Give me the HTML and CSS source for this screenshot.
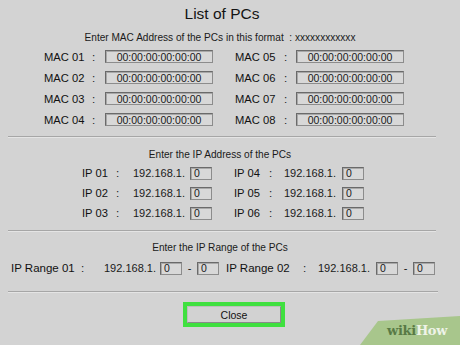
FILE: index.html
```html
<!DOCTYPE html>
<html>
<head>
<meta charset="utf-8">
<link rel="stylesheet" href="styles.css">
</head>
<body>
<main class="page">
  <h1 class="title">List of PCs</h1>
  <p class="hint">Enter MAC Address of the PCs in this format &nbsp;: xxxxxxxxxxxx</p>
  <div class="mac-grid">
    <span class="lbl">MAC 01</span><span class="colon">:</span><span class="box mac">00:00:00:00:00:00</span>
    <span class="lbl">MAC 05</span><span class="colon">:</span><span class="box mac">00:00:00:00:00:00</span>
    <span class="lbl">MAC 02</span><span class="colon">:</span><span class="box mac">00:00:00:00:00:00</span>
    <span class="lbl">MAC 06</span><span class="colon">:</span><span class="box mac">00:00:00:00:00:00</span>
    <span class="lbl">MAC 03</span><span class="colon">:</span><span class="box mac">00:00:00:00:00:00</span>
    <span class="lbl">MAC 07</span><span class="colon">:</span><span class="box mac">00:00:00:00:00:00</span>
    <span class="lbl">MAC 04</span><span class="colon">:</span><span class="box mac">00:00:00:00:00:00</span>
    <span class="lbl">MAC 08</span><span class="colon">:</span><span class="box mac">00:00:00:00:00:00</span>
  </div>
  <hr class="sep sep1">
  <p class="heading h-ip">Enter the IP Address of the PCs</p>
  <div class="ip-grid">
    <span class="lbl">IP 01</span><span class="colon">:</span><span class="ip">192.168.1.</span><span class="box oct">0</span>
    <span class="lbl">IP 04</span><span class="colon">:</span><span class="ip">192.168.1.</span><span class="box oct">0</span>
    <span class="lbl">IP 02</span><span class="colon">:</span><span class="ip">192.168.1.</span><span class="box oct">0</span>
    <span class="lbl">IP 05</span><span class="colon">:</span><span class="ip">192.168.1.</span><span class="box oct">0</span>
    <span class="lbl">IP 03</span><span class="colon">:</span><span class="ip">192.168.1.</span><span class="box oct">0</span>
    <span class="lbl">IP 06</span><span class="colon">:</span><span class="ip">192.168.1.</span><span class="box oct">0</span>
  </div>
  <hr class="sep sep2">
  <p class="heading h-range">Enter the IP Range of the PCs</p>
  <div class="range-row">
    <span class="lbl r-lbl1">IP Range 01</span><span class="colon r-col1">:</span><span class="ip r-ip1">192.168.1.</span><span class="box oct">0</span><span class="dash">-</span><span class="box oct">0</span>
    <span class="lbl r-lbl2">IP Range 02</span><span class="colon r-col2">:</span><span class="ip r-ip2">192.168.1.</span><span class="box oct">0</span><span class="dash">-</span><span class="box oct">0</span>
  </div>
  <hr class="sep sep3">
  <div class="actions">
    <div class="close-ring"><button class="close-btn">Close</button></div>
  </div>
</main>
<div class="wh-logo">
  <svg width="100" height="30" viewBox="0 0 100 30">
    <polygon points="18,6 100,1 100,30 0,30" fill="#a8c68c"/>
  </svg>
  <span class="wh-text"><span class="wh-wiki">wiki</span><span class="wh-how">How</span></span>
</div>
</body>
</html>
```
FILE: styles.css
```css
html, body {
  margin: 0;
  padding: 0;
}
body {
  width: 460px;
  height: 345px;
  overflow: hidden;
  background: #d3d3d3;
  font-family: "Liberation Sans", Arial, sans-serif;
  color: #141414;
  position: relative;
}
.page {
  width: 444px;
  display: flex;
  flex-direction: column;
}
.title {
  margin: 4px 0 0;
  font-size: 15.5px;
  line-height: 20px;
  font-weight: normal;
  text-align: center;
}
.hint {
  margin: 8px 0 0;
  font-size: 10.1px;
  line-height: 12px;
  text-align: center;
  color: #1a1a1a;
  padding-right: 4px;
}
.heading {
  margin: 0;
  font-size: 10.1px;
  line-height: 12px;
  text-align: center;
  color: #1a1a1a;
  padding-right: 4px;
}
.h-ip { margin-top: 11px; }
.h-range { margin-top: 10px; }

.lbl {
  font-size: 11.2px;
  color: #111;
}
.colon {
  font-size: 11.5px;
  color: #222;
}
.ip {
  font-size: 11px;
  color: #1a1a1a;
}
.box {
  box-sizing: border-box;
  display: flex;
  align-items: center;
  background: #d8d8d8;
  border: 1px solid #6a6a6a;
  border-right-color: #8c8c8c;
  border-bottom-color: #8c8c8c;
  box-shadow: inset 1px 1px 0 #a8a8a8;
  font-size: 10.5px;
  color: #1a1a1a;
  height: 13px;
}
.mac {
  width: 108px;
  justify-content: center;
  justify-self: start;
}
.oct {
  width: 22px;
  padding-left: 3px;
  justify-self: start;
}

.mac-grid {
  margin-top: 2px;
  padding-left: 44px;
  display: grid;
  grid-template-columns: 48px 13px 130px 49px 12px 108px;
  grid-auto-rows: 21px;
  align-items: center;
}

.ip-grid {
  margin-top: 2px;
  padding-left: 82px;
  display: grid;
  grid-template-columns: 34px 17px 57px 44px 35px 15px 58px 22px;
  grid-auto-rows: 20px;
  align-items: center;
}

.range-row {
  margin-top: 4px;
  height: 20px;
  padding-left: 11px;
  display: flex;
  align-items: center;
}
.range-row .lbl { font-size: 11.5px; }
.r-lbl1 { width: 70px; }
.r-col1 { width: 23px; }
.r-ip1 { width: 56px; }
.r-lbl2 { width: 77px; margin-left: 7px; }
.r-col2 { width: 15px; }
.r-ip2 { width: 58px; }
.dash {
  width: 15px;
  text-align: center;
  font-size: 11px;
}

.sep {
  margin: 0 8px;
  height: 0;
  border: 0;
  border-top: 1px solid #a6a6a6;
  border-bottom: 1px solid #e4e4e4;
}
.sep1 { margin-top: 6px; }
.sep2 { margin-top: 7px; }
.sep3 { margin-top: 13px; margin-right: 6px; }

.actions {
  margin-top: 9px;
  padding-left: 183px;
  display: flex;
}
.close-ring {
  box-sizing: border-box;
  width: 102px;
  height: 25px;
  border: 4px solid #3fe03f;
  display: flex;
}
.close-btn {
  flex: 1;
  margin: 0;
  padding: 0;
  border: 1px solid #8a8a8a;
  border-top-color: #bdbdbd;
  border-left-color: #bdbdbd;
  background: #d2d2d2;
  font-family: "Liberation Sans", Arial, sans-serif;
  font-size: 10.5px;
  color: #111;
}

.wh-logo {
  position: absolute;
  right: 0;
  bottom: 0;
  width: 100px;
  height: 30px;
}
.wh-logo svg {
  position: absolute;
  left: 0;
  top: 0;
}
.wh-text {
  position: absolute;
  left: 27px;
  top: 7px;
  font-family: "DejaVu Serif", "Liberation Serif", serif;
  font-weight: bold;
  font-size: 13px;
  line-height: 18px;
  letter-spacing: -0.3px;
}
.wh-wiki { color: #587a45; }
.wh-how { color: #eef3e8; }
```
